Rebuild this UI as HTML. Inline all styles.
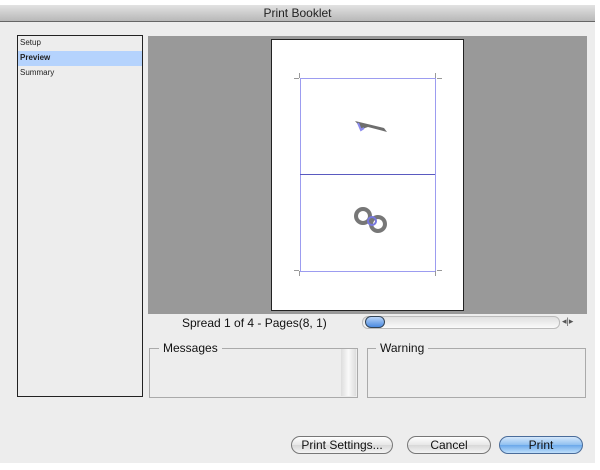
<!DOCTYPE html><html><head><style>
body{margin:0;width:600px;height:470px;background:#fff;position:relative;overflow:hidden;font-family:"Liberation Sans",sans-serif}
.a{position:absolute}
.btn{position:absolute;height:16px;border:1px solid #777;border-radius:9px;background:linear-gradient(#fff,#e6e6e6 50%,#d8d8d8 51%,#f4f4f4);font-size:12px;text-align:center;line-height:16px;color:#111}
</style></head><body>
<div class="a" style="left:0;top:5px;width:595px;height:458px;background:#ededed"></div>
<div class="a" style="left:0;top:5px;width:595px;height:16px;background:linear-gradient(#e2e2e2,#b8b8b8);border-bottom:1px solid #666;text-align:center;font-size:12px;line-height:16px;color:#222">Print Booklet</div>
<div class="a" style="left:17px;top:35px;width:124px;height:360px;border:1px solid #222;background:#ededed;font-size:8px;color:#222">
<div style="padding:2px 2px;height:11px">Setup</div>
<div style="padding:2px 2px;height:11px;background:#b5d3fd;font-weight:bold">Preview</div>
<div style="padding:2px 2px;height:11px">Summary</div></div>
<div class="a" style="left:148px;top:36px;width:439px;height:278px;background:#999"></div>
<div class="a" style="left:271px;top:39px;width:191px;height:270px;background:#fff;border:1px solid #222"></div>
<div class="a" style="left:300px;top:78px;width:134px;height:192px;border:1px solid #9c9cf0"></div>
<div class="a" style="left:300px;top:174px;width:135px;height:1px;background:#5a5ac0"></div>
<div class="a" style="left:299px;top:73px;width:1px;height:5px;background:#999"></div>
<div class="a" style="left:435px;top:73px;width:1px;height:5px;background:#999"></div>
<div class="a" style="left:299px;top:271px;width:1px;height:5px;background:#999"></div>
<div class="a" style="left:435px;top:271px;width:1px;height:5px;background:#999"></div>
<div class="a" style="left:294px;top:78px;width:5px;height:1px;background:#999"></div>
<div class="a" style="left:437px;top:78px;width:5px;height:1px;background:#999"></div>
<div class="a" style="left:294px;top:270px;width:5px;height:1px;background:#999"></div>
<div class="a" style="left:437px;top:270px;width:5px;height:1px;background:#999"></div>
<svg class="a" style="left:350px;top:115px" width="40" height="20"><path d="M5 6 L34 13 L37 17 L18 12 L12 14 Z" fill="#6e6e6e"/><path d="M8 8 L11 15 L14 13" stroke="#8a8aee" stroke-width="2" fill="none"/></svg>
<svg class="a" style="left:350px;top:205px" width="42" height="30"><circle cx="13" cy="11" r="7" fill="none" stroke="#777" stroke-width="4"/><circle cx="28" cy="19" r="7" fill="none" stroke="#777" stroke-width="4"/><circle cx="22" cy="16" r="4" fill="none" stroke="#7777dd" stroke-width="2"/></svg>
<div class="a" style="left:182px;top:316px;font-size:12px;color:#111">Spread 1 of 4 - Pages(8, 1)</div>
<div class="a" style="left:362px;top:316px;width:196px;height:11px;border:1px solid #bbb;border-radius:6px;background:linear-gradient(#e0e0e0,#fafafa)"></div>
<div class="a" style="left:365px;top:316px;width:18px;height:10px;border:1px solid #345;border-radius:6px;background:linear-gradient(#b8d4f8,#4a8ae0)"></div>
<div class="a" style="left:562px;top:316px;font-size:9px;color:#555">◂|▸</div>
<div class="a" style="left:149px;top:348px;width:207px;height:48px;border:1px solid #aaa"></div>
<div class="a" style="left:341px;top:349px;width:15px;height:47px;background:linear-gradient(90deg,#ddd,#fafafa,#ddd)"></div>
<div class="a" style="left:159px;top:341px;padding:0 4px;background:#ededed;font-size:12px;color:#111">Messages</div>
<div class="a" style="left:367px;top:348px;width:217px;height:48px;border:1px solid #aaa"></div>
<div class="a" style="left:376px;top:341px;padding:0 4px;background:#ededed;font-size:12px;color:#111">Warning</div>
<div class="btn" style="left:291px;top:436px;width:100px">Print Settings...</div>
<div class="btn" style="left:407px;top:436px;width:82px">Cancel</div>
<div class="btn" style="left:499px;top:436px;width:82px;border-color:#4a6c9a;background:linear-gradient(#d5e8fb,#8fc0f0 50%,#6aa8ea 51%,#c0e0fb)">Print</div>
</body></html>
